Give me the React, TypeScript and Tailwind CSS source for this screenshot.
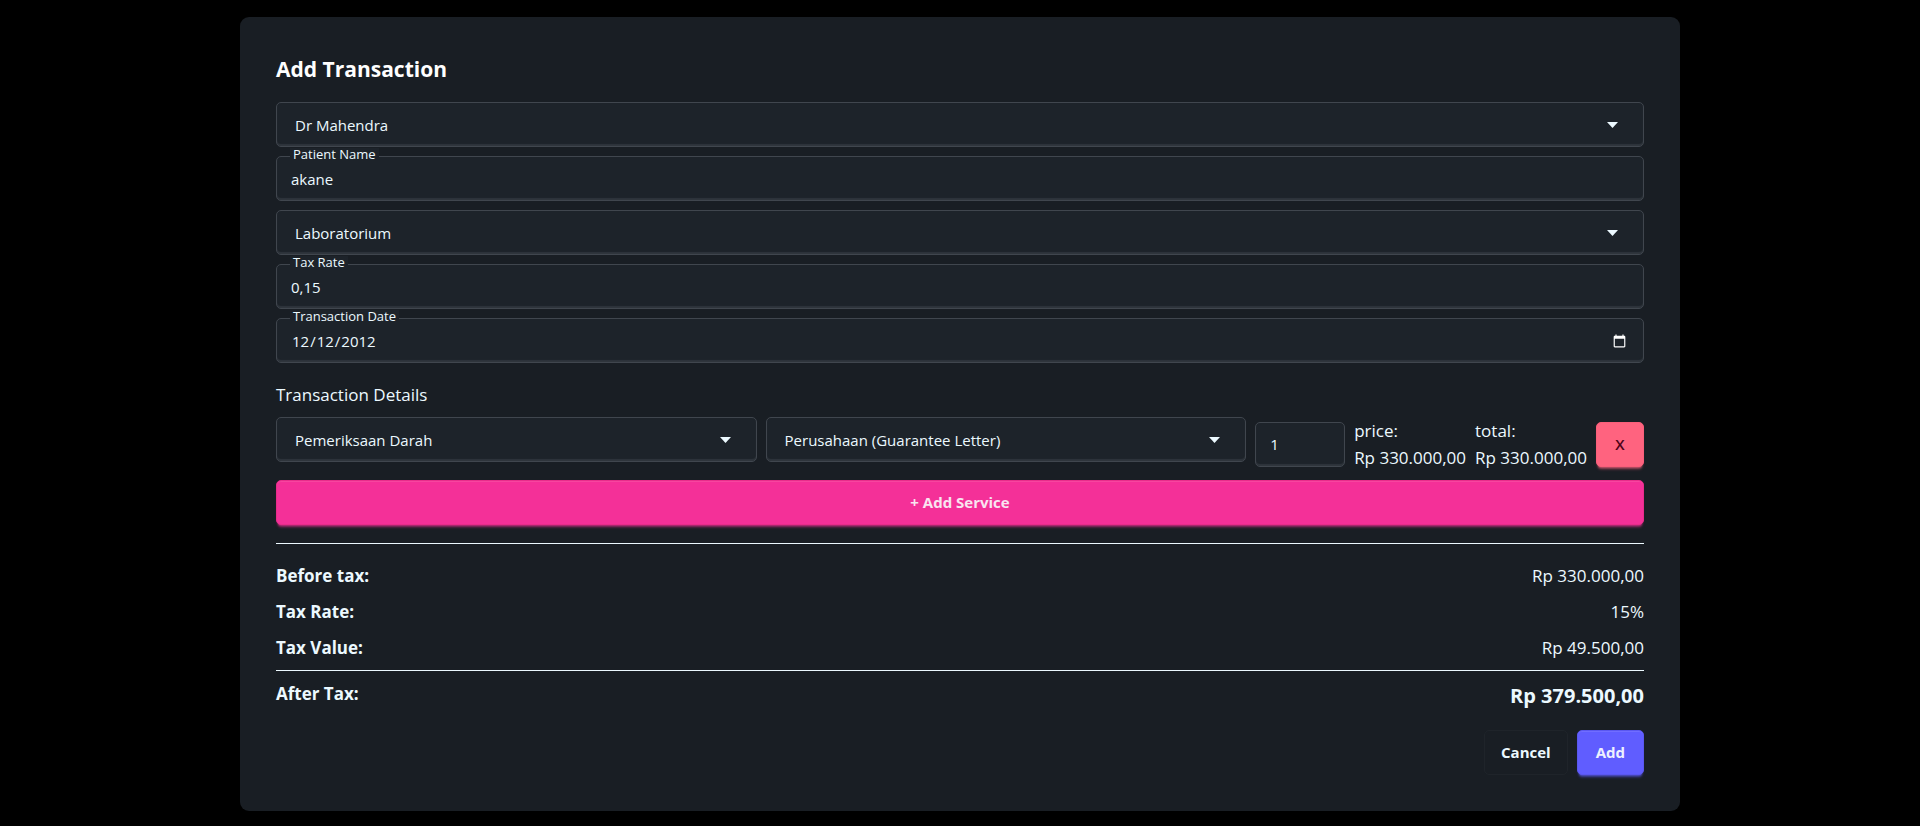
import { ReactNode, useState } from "react";

const control =
  "block h-[45px] w-full appearance-none rounded-[5px] border border-[#40464e] bg-[#1d232a] text-[15px] text-[#ecf9ff] shadow-[inset_0_-2px_1px_#2f353c] outline-none focus:border-[#ecf9ff]";

function SelectBox({ label, options }: { label: string; options: string[] }) {
  return (
    <div className="relative min-w-0 flex-1">
      <select aria-label={label} className={`${control} pl-[18px] pr-10 pt-0.5`}>
        {options.map((option) => (
          <option key={option}>{option}</option>
        ))}
      </select>
      <svg
        viewBox="0 0 11 6"
        className="pointer-events-none absolute right-[26px] top-5 h-[6px] w-[11px] fill-[#ecf9ff]"
        aria-hidden="true"
      >
        <path d="M0 0h11L5.5 6z" />
      </svg>
    </div>
  );
}

function FloatingField({ id, label, children }: { id: string; label: string; children: ReactNode }) {
  return (
    <div className="relative">
      {children}
      <label
        htmlFor={id}
        className="absolute -top-2 left-3.5 bg-[#1d232a] px-[3px] text-[13px] leading-3 text-[#ecf9ff]"
      >
        {label}
      </label>
    </div>
  );
}

function SummaryRow({ label, value }: { label: string; value: string }) {
  return (
    <div className="flex justify-between">
      <span className="font-bold">{label}</span>
      <span>{value}</span>
    </div>
  );
}

export default function App() {
  const [patient, setPatient] = useState("akane");
  const [rate, setRate] = useState("0,15");
  const [date, setDate] = useState("2012-12-12");
  const [quantity, setQuantity] = useState("1");

  return (
    <main className="min-h-screen bg-black pt-[17px] font-['Open_Sans','Noto_Sans',sans-serif] text-[17px] leading-[27px] text-[#ecf9ff] scheme-dark">
      <form
        onSubmit={(event) => event.preventDefault()}
        className="mx-auto w-3/4 rounded-[9px] bg-[#191e24] p-9"
      >
        <h1 className="mb-4 text-[21px] font-bold leading-[33px] text-white">Add Transaction</h1>

        <div className="flex flex-col gap-[9px]">
          <div className="flex">
            <SelectBox label="Doctor" options={["Dr Mahendra"]} />
          </div>
          <FloatingField id="patient" label="Patient Name">
            <input
              id="patient"
              type="text"
              value={patient}
              onChange={(event) => setPatient(event.target.value)}
              className={`${control} px-3.5`}
            />
          </FloatingField>
          <div className="flex">
            <SelectBox label="Department" options={["Laboratorium"]} />
          </div>
          <FloatingField id="rate" label="Tax Rate">
            <input
              id="rate"
              type="text"
              value={rate}
              onChange={(event) => setRate(event.target.value)}
              className={`${control} px-3.5`}
            />
          </FloatingField>
          <FloatingField id="date" label="Transaction Date">
            <input
              id="date"
              type="date"
              value={date}
              onChange={(event) => setDate(event.target.value)}
              className={`${control} px-3.5 pt-0.5`}
            />
          </FloatingField>
        </div>

        <h2 className="mb-[9px] mt-[18px] text-[17px] leading-[27px]">Transaction Details</h2>

        <div className="flex items-center gap-[9px]">
          <div className="flex flex-1 gap-[9px] self-start">
            <SelectBox label="Service" options={["Pemeriksaan Darah"]} />
            <SelectBox label="Payer" options={["Perusahaan (Guarantee Letter)"]} />
          </div>
          <div className="w-[90px]">
            <input
              aria-label="Quantity"
              type="number"
              value={quantity}
              onChange={(event) => setQuantity(event.target.value)}
              className={`${control} px-3.5`}
            />
          </div>
          <div>
            <p>price:</p>
            <p>Rp 330.000,00</p>
          </div>
          <div>
            <p>total:</p>
            <p>Rp 330.000,00</p>
          </div>
          <button
            type="button"
            aria-label="Remove service"
            className="h-[45px] w-12 rounded-[5px] border border-[#f95f7a] bg-[#ff637f] text-[15px] font-semibold text-[#4d0218] shadow-[0_3px_2px_-2px_#ff637f80,0_4px_3px_-2px_#ff637f80]"
          >
            X
          </button>
        </div>

        <button
          type="button"
          className="mt-[9px] block h-[45px] w-full rounded-[5px] border border-[#e82c8b] bg-[#f43098] text-[15px] font-bold text-[#f9e4f0] shadow-[inset_0_1px_0_#f6459f,0_3px_2px_-2px_#f4309880,0_4px_3px_-2px_#f4309880]"
        >
          + Add Service
        </button>

        <hr className="my-[18px] border-[#ecf9ff]" />

        <div className="flex flex-col gap-[9px]">
          <SummaryRow label="Before tax:" value="Rp 330.000,00" />
          <SummaryRow label="Tax Rate:" value="15%" />
          <SummaryRow label="Tax Value:" value="Rp 49.500,00" />
        </div>

        <hr className="my-[9px] border-[#ecf9ff]" />

        <div className="flex justify-between font-bold">
          <span>After Tax:</span>
          <span className="text-[20px] leading-8">Rp 379.500,00</span>
        </div>

        <div className="mt-[18px] flex justify-end gap-[9px]">
          <button
            type="button"
            className="h-[45px] rounded-[5px] border border-[#1f242a] bg-[#191e24] px-4 text-[15px] font-bold text-[#ecf9ff]"
          >
            Cancel
          </button>
          <button
            type="submit"
            className="h-[45px] rounded-[5px] border border-[#5a57f0] bg-[#605dff] px-[18px] text-[15px] font-bold text-[#edf1fe] shadow-[inset_0_1px_0_#706dff,0_3px_2px_-2px_#605dff80,0_4px_3px_-2px_#605dff80]"
          >
            Add
          </button>
        </div>
      </form>
    </main>
  );
}
